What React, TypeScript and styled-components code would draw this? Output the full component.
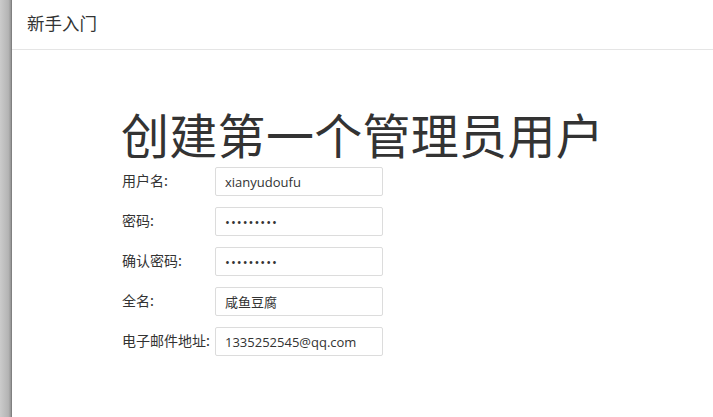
import styled, { createGlobalStyle } from 'styled-components';

const Global = createGlobalStyle`
  html, body {
    margin: 0;
    padding: 0;
    background: #fff;
    font-family: "Open Sans", "Noto Sans CJK SC", sans-serif;
    color: #333;
  }
`;

const StPage = styled.div`
  display: flex;
  height: 417px;
  overflow: hidden;
`;

const SideEdge = styled.div`
  width: 12px;
  flex-shrink: 0;
  background: linear-gradient(to right, #cbcbcb 0%, #b4b4b4 70%, #9a9a9a 88%, #727272 100%);
`;

const Main = styled.div`
  flex: 1;
  display: flex;
  flex-direction: column;
`;

const Header = styled.header`
  height: 45px;
  padding: 0 0 4px 15px;
  border-bottom: 1px solid #e5e5e5;
  display: flex;
  align-items: center;
  font-family: "Noto Sans CJK SC", sans-serif;
  font-size: 17.5px;
  color: #333;
`;

const Content = styled.div`
  padding: 52px 0 0 109px;
`;

const Title = styled.h1`
  margin: 0 0 3px;
  font-family: "Noto Sans CJK SC", sans-serif;
  font-weight: 400;
  font-size: 48px;
  line-height: 62px;
  color: #333;
  letter-spacing: 0.3px;
`;

const Form = styled.form`
  display: flex;
  flex-direction: column;
  gap: 11px;
`;

const Row = styled.div`
  display: flex;
  align-items: center;
  height: 29px;
`;

const Label = styled.label`
  width: 93px;
  padding-left: 1px;
  font-family: "Noto Sans CJK SC", sans-serif;
  font-size: 14px;
  color: #333;
  margin-top: -4px;
`;

const Field = styled.input<{ $cjk?: boolean }>`
  box-sizing: border-box;
  width: 168px;
  height: 29px;
  border: 1px solid #dcdcdc;
  border-radius: 2px;
  padding: 0 9px;
  font-family: ${(p) => (p.$cjk ? '"Noto Sans CJK SC", sans-serif' : '"Open Sans", "Noto Sans CJK SC", sans-serif')};
  font-size: 13px;
  color: #333;
  background: #fff;
  outline: none;
  &[type='password'] {
    letter-spacing: 1px;
  }
`;

const fields = [
  { label: '用户名:', value: 'xianyudoufu', type: 'text' },
  { label: '密码:', value: '123456789', type: 'password' },
  { label: '确认密码:', value: '123456789', type: 'password' },
  { label: '全名:', value: '咸鱼豆腐', type: 'text', cjk: true },
  { label: '电子邮件地址:', value: '1335252545@qq.com', type: 'text' },
];

const App = () => {
  return (
    <StPage>
      <Global />
      <SideEdge />
      <Main>
        <Header>新手入门</Header>
        <Content>
          <Title>创建第一个管理员用户</Title>
          <Form onSubmit={(e) => e.preventDefault()}>
            {fields.map((f) => (
              <Row key={f.label}>
                <Label>{f.label}</Label>
                <Field type={f.type} defaultValue={f.value} $cjk={f.cjk} readOnly />
              </Row>
            ))}
          </Form>
        </Content>
      </Main>
    </StPage>
  );
};

export default App;
